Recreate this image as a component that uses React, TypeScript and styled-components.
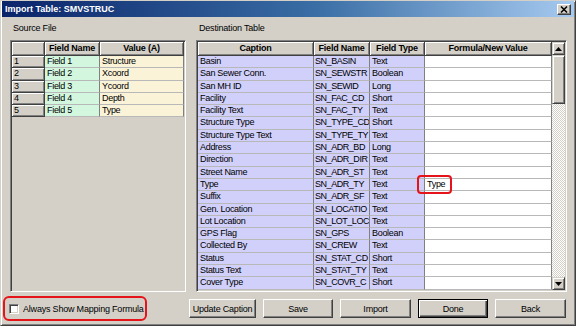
import React from 'react';
import styled, { createGlobalStyle } from 'styled-components';

const GlobalStyle = createGlobalStyle`
  html, body {
    margin: 0;
    padding: 0;
    background: #d4d0c8;
  }
  body {
    font-family: "Liberation Sans", Arial, sans-serif;
    font-size: 9px;
    letter-spacing: -0.2px;
    color: #000;
  }
`;

const Window = styled.div`
  width: 576px;
  height: 326px;
  box-sizing: border-box;
  display: flex;
  flex-direction: column;
  background: #d4d0c8;
  border: 1px solid;
  border-color: #d4d0c8 #404040 #404040 #d4d0c8;
  box-shadow: inset 1px 1px #fff, inset -1px -1px #808080;
  overflow: hidden;
`;

const TitleBar = styled.div`
  height: 16px;
  margin: 0 1px;
  display: flex;
  align-items: center;
  justify-content: space-between;
  padding: 0 3px 0 3px;
  background: linear-gradient(to right, #0a246a 0%, #3a6ea5 55%, #a6caf0 100%);
  color: #fff;
  font-weight: bold;
  letter-spacing: 0;
`;

const CloseButton = styled.div`
  width: 14px;
  height: 11px;
  box-sizing: border-box;
  display: flex;
  align-items: center;
  justify-content: center;
  background: #d4d0c8;
  border: 1px solid;
  border-color: #fff #404040 #404040 #fff;
  box-shadow: inset -1px -1px #808080;
`;

const Panes = styled.div`
  display: flex;
  gap: 10px;
  padding: 0 10px 0 9px;
`;

const Pane = styled.div<{ $width?: number }>`
  display: flex;
  flex-direction: column;
  width: ${({ $width }) => ($width ? `${$width}px` : 'auto')};
  flex: ${({ $width }) => ($width ? 'none' : '1')};
`;

const PaneLabel = styled.div`
  height: 23px;
  box-sizing: border-box;
  padding: 5px 0 0 3px;
  line-height: 12px;
`;

const GridFrame = styled.div`
  height: 252px;
  box-sizing: border-box;
  display: flex;
  border: 1px solid;
  border-color: #808080 #fff #fff #808080;
  box-shadow: inset 1px 1px #404040, inset -1px -1px #d4d0c8;
  padding: 1px;
  background: #d4d0c8;
`;

const Table = styled.div<{ $cols: string }>`
  display: grid;
  grid-template-columns: ${({ $cols }) => $cols};
  grid-template-rows: 14px;
  grid-auto-rows: 12.3px;
  align-content: start;
  flex: 1;
  overflow: hidden;
`;

const HeadCell = styled.div<{ $align?: string }>`
  box-sizing: border-box;
  background: #d4d0c8;
  border-right: 1px solid #404040;
  border-bottom: 1px solid #404040;
  box-shadow: inset 1px 1px #fff, inset -1px -1px #808080;
  font-weight: bold;
  text-align: ${({ $align }) => $align || 'center'};
  padding: 0 2px;
  line-height: 13px;
  white-space: nowrap;
  overflow: hidden;
`;

const RowHead = styled(HeadCell)`
  font-weight: normal;
  line-height: 11px;
  text-align: left;
  padding-left: 2px;
`;

const Cell = styled.div<{ $bg: string; $tight?: boolean }>`
  position: relative;
  box-sizing: border-box;
  background: ${({ $bg }) => $bg};
  border-right: 1px solid #808080;
  border-bottom: 1px solid #b8b8b8;
  padding: 0 0 0 ${({ $tight }) => ($tight ? 1 : 2)}px;
  line-height: 11px;
  letter-spacing: ${({ $tight }) => ($tight ? -0.45 : -0.3)}px;
  white-space: nowrap;
  overflow: ${({ $bg }) => ($bg === '#fff' ? 'visible' : 'hidden')};
`;

const Highlight = styled.span`
  position: absolute;
  left: -8px;
  top: -4px;
  width: 35px;
  height: 19px;
  box-sizing: border-box;
  border: 2px solid #e5141b;
  border-radius: 4px;
  z-index: 2;
`;

const ScrollBar = styled.div`
  width: 13px;
  display: flex;
  flex-direction: column;
  background: repeating-conic-gradient(#fff 0 25%, #d4d0c8 0 50%) 0 0 / 2px 2px;
`;

const ScrollPart = styled.div<{ $h?: number }>`
  height: ${({ $h }) => ($h ? `${$h}px` : 'auto')};
  flex: none;
  box-sizing: border-box;
  display: flex;
  align-items: center;
  justify-content: center;
  background: #d4d0c8;
  border: 1px solid;
  border-color: #d4d0c8 #404040 #404040 #d4d0c8;
  box-shadow: inset 1px 1px #fff, inset -1px -1px #808080;
`;

const Track = styled.div`
  flex: 1;
`;

const Footer = styled.div`
  display: flex;
  align-items: center;
  justify-content: space-between;
  padding: 4px 9px 0 2px;
`;

const CheckArea = styled.label`
  width: 144px;
  height: 25px;
  box-sizing: border-box;
  display: flex;
  align-items: center;
  gap: 4px;
  padding-left: 4px;
  border: 2px solid #e5141b;
  border-radius: 6px;
  white-space: nowrap;
`;

const CheckBox = styled.span`
  width: 10px;
  height: 10px;
  flex: none;
  box-sizing: border-box;
  background: #fff;
  border: 1px solid;
  border-color: #808080 #fff #fff #808080;
  box-shadow: inset 1px 1px #404040, inset -1px -1px #d4d0c8;
`;

const Buttons = styled.div`
  display: flex;
  gap: 7px;
`;

const Button = styled.button<{ $width: number; $default?: boolean }>`
  width: ${({ $width }) => $width}px;
  height: 19px;
  box-sizing: border-box;
  padding: 0;
  font: inherit;
  letter-spacing: inherit;
  color: #000;
  background: #d4d0c8;
  border: 1px solid;
  border-color: ${({ $default }) => ($default ? '#000' : '#fff #404040 #404040 #fff')};
  box-shadow: ${({ $default }) =>
    $default
      ? 'inset 1px 1px #fff, inset -1px -1px #404040, inset -2px -2px #808080'
      : 'inset -1px -1px #808080'};
`;

const source = [
  ['1', 'Field 1', 'Structure'],
  ['2', 'Field 2', 'Xcoord'],
  ['3', 'Field 3', 'Ycoord'],
  ['4', 'Field 4', 'Depth'],
  ['5', 'Field 5', 'Type'],
];

const dest = [
  ['Basin', 'SN_BASIN', 'Text', ''],
  ['San Sewer Conn.', 'SN_SEWSTR', 'Boolean', ''],
  ['San MH ID', 'SN_SEWID', 'Long', ''],
  ['Facility', 'SN_FAC_CD', 'Short', ''],
  ['Facility Text', 'SN_FAC_TY', 'Text', ''],
  ['Structure Type', 'SN_TYPE_CD', 'Short', ''],
  ['Structure Type Text', 'SN_TYPE_TY', 'Text', ''],
  ['Address', 'SN_ADR_BD', 'Long', ''],
  ['Direction', 'SN_ADR_DIR', 'Text', ''],
  ['Street Name', 'SN_ADR_ST', 'Text', ''],
  ['Type', 'SN_ADR_TY', 'Text', 'Type'],
  ['Suffix', 'SN_ADR_SF', 'Text', ''],
  ['Gen. Location', 'SN_LOCATIO', 'Text', ''],
  ['Lot Location', 'SN_LOT_LOC', 'Text', ''],
  ['GPS Flag', 'SN_GPS', 'Boolean', ''],
  ['Collected By', 'SN_CREW', 'Text', ''],
  ['Status', 'SN_STAT_CD', 'Short', ''],
  ['Status Text', 'SN_STAT_TY', 'Text', ''],
  ['Cover Type', 'SN_COVR_C', 'Short', ''],
];

const GREEN = '#d2f6de';
const CREAM = '#fbf3d8';
const LAVENDER = '#d0d0fa';

function Arrow({ up }: { up?: boolean }) {
  return (
    <svg width="7" height="4" viewBox="0 0 7 4">
      <polygon points={up ? '3.5,0 7,4 0,4' : '0,0 7,0 3.5,4'} fill="#000" />
    </svg>
  );
}

export default function App() {
  return (
    <>
      <GlobalStyle />
      <Window>
        <TitleBar>
          <span>Import Table: SMVSTRUC</span>
          <CloseButton>
            <svg width="8" height="7" viewBox="0 0 8 7">
              <path d="M1 0.5 L7 6.5 M7 0.5 L1 6.5" stroke="#000" strokeWidth="1.5" />
            </svg>
          </CloseButton>
        </TitleBar>

        <Panes>
          <Pane $width={176}>
            <PaneLabel>Source File</PaneLabel>
            <GridFrame>
              <Table $cols="33px 55px 84px">
                <HeadCell />
                <HeadCell>Field Name</HeadCell>
                <HeadCell>Value (A)</HeadCell>
                {source.map(([n, f, v]) => (
                  <React.Fragment key={n}>
                    <RowHead>{n}</RowHead>
                    <Cell $bg={GREEN}>{f}</Cell>
                    <Cell $bg={CREAM}>{v}</Cell>
                  </React.Fragment>
                ))}
              </Table>
            </GridFrame>
          </Pane>

          <Pane>
            <PaneLabel>Destination Table</PaneLabel>
            <GridFrame>
              <Table $cols="116px 56px 55px 127px">
                <HeadCell>Caption</HeadCell>
                <HeadCell>Field Name</HeadCell>
                <HeadCell>Field Type</HeadCell>
                <HeadCell>Formula/New Value</HeadCell>
                {dest.map(([c, f, t, v]) => (
                  <React.Fragment key={f}>
                    <Cell $bg={LAVENDER}>{c}</Cell>
                    <Cell $bg={LAVENDER} $tight>{f}</Cell>
                    <Cell $bg={LAVENDER}>{t}</Cell>
                    <Cell $bg="#fff">
                      {v}
                      {v && <Highlight />}
                    </Cell>
                  </React.Fragment>
                ))}
              </Table>
              <ScrollBar>
                <ScrollPart $h={13}>
                  <Arrow up />
                </ScrollPart>
                <ScrollPart $h={49} />
                <Track />
                <ScrollPart $h={13}>
                  <Arrow />
                </ScrollPart>
              </ScrollBar>
            </GridFrame>
          </Pane>
        </Panes>

        <Footer>
          <CheckArea>
            <CheckBox />
            Always Show Mapping Formula
          </CheckArea>
          <Buttons>
            <Button $width={67}>Update Caption</Button>
            <Button $width={70}>Save</Button>
            <Button $width={71}>Import</Button>
            <Button $width={70} $default>Done</Button>
            <Button $width={71}>Back</Button>
          </Buttons>
        </Footer>
      </Window>
    </>
  );
}
